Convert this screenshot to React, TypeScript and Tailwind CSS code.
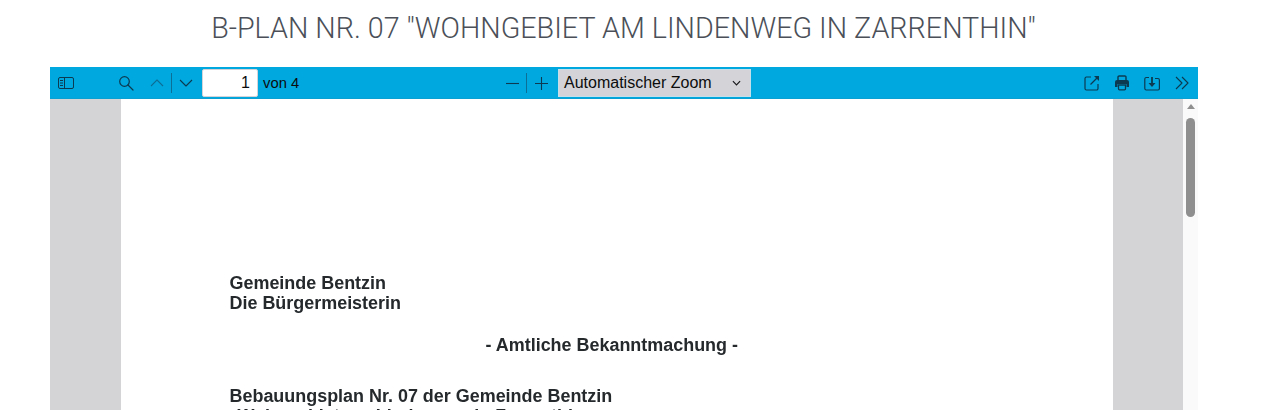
import React from "react";

const stroke = "#0c3a50";

function Sep() {
  return <div className="w-px h-5 bg-[#0c6f95]" />;
}

function IconBtn({ children, className = "w-[30px]" }: { children: React.ReactNode; className?: string }) {
  return <div className={"h-[20px] flex items-center justify-center " + className}>{children}</div>;
}

function Toolbar() {
  return (
    <div className="h-8 bg-[#00a8e0] border-b border-b-[#0ba0d2] flex items-center relative font-['Liberation_Sans',sans-serif] text-[#0c2836]">
      <div className="flex items-center flex-1 pl-[1px] h-full">
        <IconBtn>
          <svg width="16" height="16" viewBox="0 0 16 16" fill="none" stroke={stroke} strokeWidth="1">
            <rect x="0.5" y="2.5" width="15" height="11" rx="1.5" />
            <path d="M6.5 2.5v11M2 5.5h3M2 8h3M2 10.5h3" />
          </svg>
        </IconBtn>
        <div className="w-[30px]" />
        <IconBtn>
          <svg width="16" height="16" viewBox="0 0 16 16" fill="none" stroke={stroke} strokeWidth="1.2">
            <circle cx="6.5" cy="6.5" r="4.8" />
            <path d="M10 10l5 5" strokeLinecap="round" />
          </svg>
        </IconBtn>
        <IconBtn className="w-[30px] pl-[2px]">
          <svg width="16" height="16" viewBox="0 0 16 16" fill="none" stroke="#0c6f95" strokeWidth="1.1">
            <path d="M2 11l6-6 6 6" strokeLinejoin="round" />
          </svg>
        </IconBtn>
        <Sep />
        <IconBtn className="w-[30px] pr-[2px]">
          <svg width="16" height="16" viewBox="0 0 16 16" fill="none" stroke={stroke} strokeWidth="1.1">
            <path d="M2 5l6 6 6-6" strokeLinejoin="round" />
          </svg>
        </IconBtn>
        <div className="w-14 h-7 bg-white rounded-[2px] border border-[#d4d4d8] text-right text-[#0c0c0d] text-base leading-[26px] pr-[7px]">
          1
        </div>
        <span className="ml-[5px] mt-[1px] text-[14.8px] text-[#0c0c0d]">von 4</span>
      </div>
      <div className="absolute left-[448px] top-0 h-full flex items-center">
        <IconBtn className="w-[28px]">
          <svg width="16" height="16" viewBox="0 0 16 16" fill="none" stroke={stroke} strokeWidth="1.1">
            <path d="M2 8.5h13" />
          </svg>
        </IconBtn>
        <Sep />
        <IconBtn className="w-[28px]">
          <svg width="16" height="16" viewBox="0 0 16 16" fill="none" stroke={stroke} strokeWidth="1.1">
            <path d="M2 8.5h13M8.5 2v13" />
          </svg>
        </IconBtn>
        <div className="ml-[3px] w-[193px] h-[28px] bg-[#d4d4d8] border border-[#c4dfe9] flex items-center justify-between pl-[5px] pr-[9px] text-base text-[#0c0c0d]">
          <span>Automatischer Zoom</span>
          <svg width="9" height="6" viewBox="0 0 10 6" fill="none" stroke="#18181b" strokeWidth="1.3">
            <path d="M1 1l4 4 4-4" />
          </svg>
        </div>
      </div>
      <div className="flex items-center pr-[1px]">
        <IconBtn>
          <svg width="16" height="16" viewBox="0 0 16 16" fill="none" stroke={stroke} strokeWidth="1.2">
            <path d="M7 2H2.5A1.5 1.5 0 0 0 1 3.5v10A1.5 1.5 0 0 0 2.5 15h10a1.5 1.5 0 0 0 1.5-1.5V9" />
            <path d="M6.5 9.5L14 2" />
            <path d="M10 1h5v5z" fill={stroke} stroke="none" />
          </svg>
        </IconBtn>
        <IconBtn>
          <svg width="16" height="16" viewBox="0 0 16 16" fill="none">
            <path d="M1 7a2 2 0 0 1 2-2h10a2 2 0 0 1 2 2v5h-2.5V9h-9v3H1z" fill={stroke} />
            <path d="M4 5V2.2A1.2 1.2 0 0 1 5.2 1h5.6A1.2 1.2 0 0 1 12 2.2V5" stroke={stroke} strokeWidth="1.4" />
            <path d="M4.5 10v3.8a1 1 0 0 0 1 1h5a1 1 0 0 0 1-1V10z" stroke={stroke} strokeWidth="1.3" />
          </svg>
        </IconBtn>
        <IconBtn>
          <svg width="16" height="16" viewBox="0 0 16 16" fill="none" stroke={stroke} strokeWidth="1.2">
            <path d="M5 2.5H2A1.5 1.5 0 0 0 .8 4v9.5A1.5 1.5 0 0 0 2 15h12a1.5 1.5 0 0 0 1.4-1.5V5A1.5 1.5 0 0 0 14 3.5h-3" />
            <path d="M8 2v7" strokeWidth="1.8" />
            <path d="M4.5 8h7L8 12z" fill={stroke} stroke="none" />
          </svg>
        </IconBtn>
        <IconBtn>
          <svg width="16" height="16" viewBox="0 0 16 16" fill="none" stroke={stroke} strokeWidth="1.1">
            <path d="M2 2l6 6-6 6M8 2l6 6-6 6" strokeLinejoin="round" />
          </svg>
        </IconBtn>
      </div>
    </div>
  );
}

function Page() {
  return (
    <div className="w-[992px] bg-white pt-[174px] pl-[109px] font-['Liberation_Sans',sans-serif] font-bold text-[#25292c] text-[17.95px] leading-[20px] overflow-hidden blur-[0.3px]">
      <div>Gemeinde Bentzin</div>
      <div>Die Bürgermeisterin</div>
      <div className="mt-[22px] pl-[256px]">- Amtliche Bekanntmachung -</div>
      <div className="mt-[31px]">Bebauungsplan Nr. 07 der Gemeinde Bentzin</div>
      <div className="pl-[8px]">Wohngebiet am Lindenweg in Zarrenthin</div>
    </div>
  );
}

export default function App() {
  return (
    <div className="h-[410px] overflow-hidden bg-white">
      <h1 className="w-[1247px] h-[67px] pt-[8px] text-center font-['Roboto',sans-serif] font-light text-[28.7px] leading-[40px] text-[#4b5058]">
        B-PLAN NR. 07 "WOHNGEBIET AM LINDENWEG IN ZARRENTHIN"
      </h1>
      <div className="ml-[50px] w-[1148px] h-[343px] flex flex-col">
        <Toolbar />
        <div className="flex flex-1 min-h-0 overflow-hidden">
          <div className="flex-1 flex justify-center bg-[#d4d4d7] overflow-hidden">
            <Page />
          </div>
          <div className="w-[15px] bg-[#fafafa] flex flex-col items-center">
            <div className="mt-[5px] w-0 h-0 border-x-[4px] border-x-transparent border-b-[5px] border-b-[#8f8f8f]" />
            <div className="mt-[9px] w-[9px] h-[99px] rounded-full bg-[#8f8f8f]" />
          </div>
        </div>
      </div>
    </div>
  );
}
